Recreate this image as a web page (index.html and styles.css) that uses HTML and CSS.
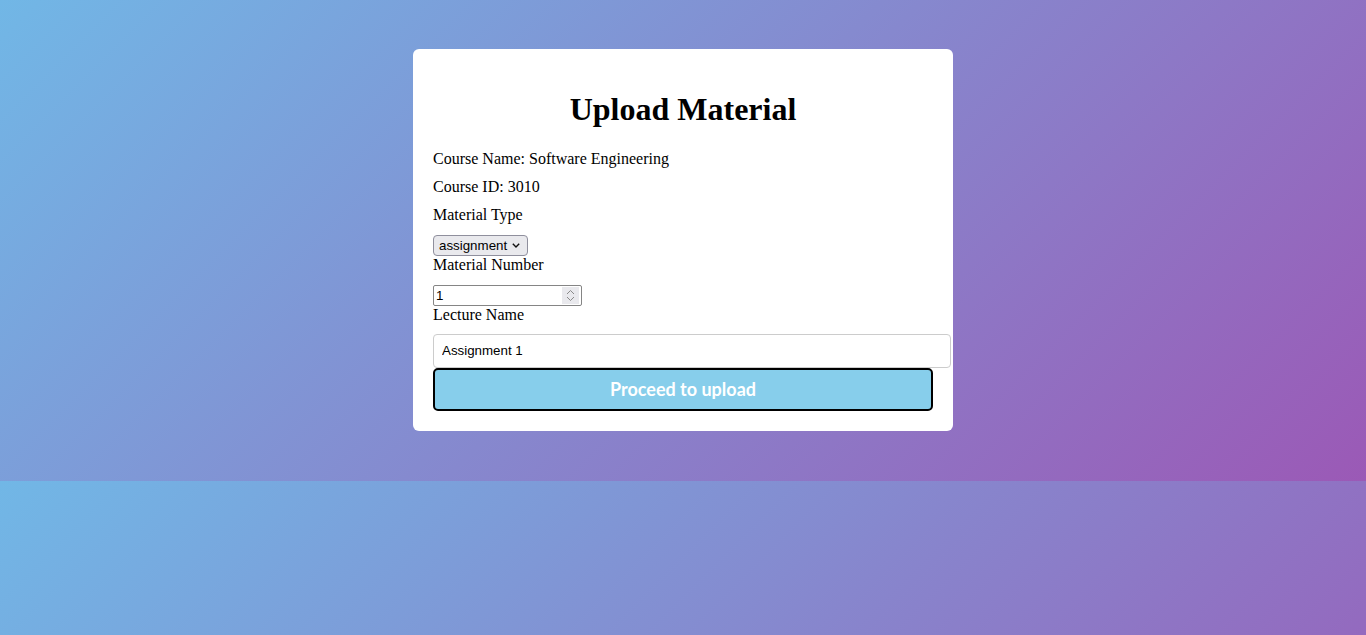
FILE: index.html
```html
<!DOCTYPE html>
<html lang="en">
<head>
<meta charset="utf-8">
<title>Upload Material</title>
<link rel="stylesheet" href="styles.css">
</head>
<body>
<div class="card">
  <h1 class="title">Upload Material</h1>
  <p class="info">Course Name: Software Engineering</p>
  <p class="info">Course ID: 3010</p>
  <form class="upload-form">
    <label class="field-label" for="type">Material Type</label>
    <select id="type" class="select">
      <option selected>assignment</option>
      <option>lecture</option>
      <option>tutorial</option>
    </select>
    <label class="field-label" for="num">Material Number</label>
    <input id="num" class="number" type="number" value="1">
    <label class="field-label" for="name">Lecture Name</label>
    <input id="name" class="text" type="text" value="Assignment 1">
    <button type="button" class="submit">Proceed to upload</button>
  </form>
</div>
</body>
</html>
```

FILE: styles.css
```css
html {
  margin: 0;
}
body {
  margin: 0;
  padding: 49px 0 50px;
  font-family: "Liberation Serif", "Times New Roman", serif;
  font-size: 16px;
  color: #000;
  background: linear-gradient(135deg, #71b7e6, #9b59b6);
}
.card {
  width: 500px;
  margin: 0 auto;
  padding: 21px 20px 20px;
  background: #fff;
  border-radius: 6px;
}
.title {
  font-size: 32px;
  font-weight: bold;
  text-align: center;
  margin: 21.44px 0;
}
.info {
  margin: 0 0 10px;
}
.upload-form {
  margin: 0;
}
.field-label {
  display: block;
  margin: 0;
  padding-bottom: 10px;
}
.select {
  display: block;
  -webkit-appearance: none;
  appearance: none;
  margin: 1px 0 0;
  box-sizing: border-box;
  width: 95px;
  height: 21px;
  padding: 0 0 0 5px;
  border: 1px solid #8f8f9d;
  border-radius: 4px;
  background-color: #e9e9ed;
  background-image: url("data:image/svg+xml,%3Csvg xmlns='http://www.w3.org/2000/svg' width='8' height='5'%3E%3Cpath d='M0.8 0.8 L4 4 L7.2 0.8' fill='none' stroke='%23111' stroke-width='1.4'/%3E%3C/svg%3E");
  background-repeat: no-repeat;
  background-position: right 7px center;
  color: #000;
  font-family: "Liberation Sans", Arial, sans-serif;
  font-size: 13.333px;
  line-height: 19px;
}
.number {
  display: block;
  -moz-appearance: textfield;
  appearance: textfield;
  margin: 1px 0 0;
  box-sizing: border-box;
  width: 149px;
  height: 21px;
  padding: 0 2px;
  border: 1px solid #858585;
  border-radius: 2px;
  background-color: #fff;
  background-image: url("data:image/svg+xml,%3Csvg xmlns='http://www.w3.org/2000/svg' width='17' height='17'%3E%3Crect width='17' height='17' fill='%23e9e9ed'/%3E%3Cpath d='M5 7 L8.5 3.5 L12 7 M5 10 L8.5 13.5 L12 10' fill='none' stroke='%238a8a8a' stroke-width='1'/%3E%3C/svg%3E");
  background-repeat: no-repeat;
  background-position: right 2px center;
  color: #000;
  font-family: "Liberation Sans", Arial, sans-serif;
  font-size: 13.333px;
}
.number::-webkit-inner-spin-button,
.number::-webkit-outer-spin-button {
  -webkit-appearance: none;
  margin: 0;
}
.text {
  display: block;
  width: 100%;
  padding: 8px;
  border: 1px solid #ccc;
  border-radius: 4px;
  font-family: "Liberation Sans", Arial, sans-serif;
  font-size: 13.333px;
  line-height: 16px;
  margin: 0;
}
.submit {
  display: block;
  width: 100%;
  padding: 10px;
  line-height: 19px;
  background: #87ceeb;
  color: #fff;
  border: 2px solid #000;
  border-radius: 5px;
  font-family: Lato, "Liberation Sans", Arial, sans-serif;
  font-size: 18px;
  font-weight: bold;
  cursor: pointer;
}
```
